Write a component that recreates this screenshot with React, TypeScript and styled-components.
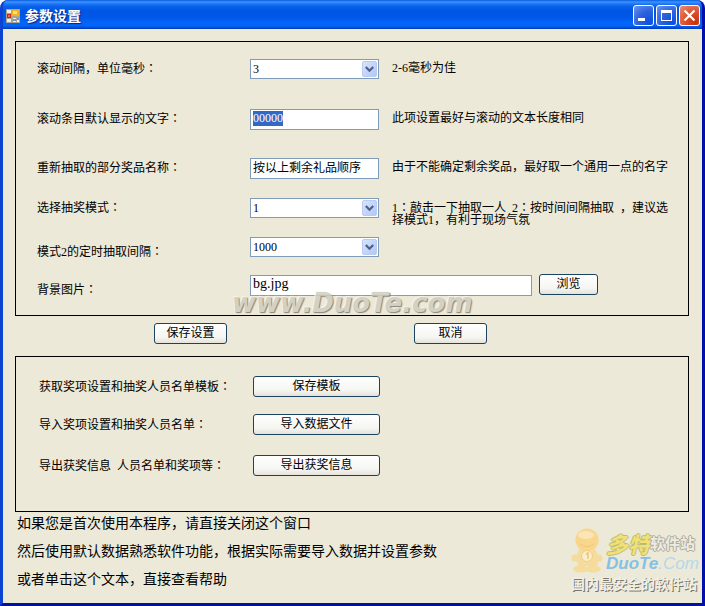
import React, { useEffect, useRef } from 'react';
import styled, { createGlobalStyle } from 'styled-components';

const GlobalStyle = createGlobalStyle`
  *, *::before, *::after { box-sizing: border-box; }
  html, body, #root { height: 100%; }
  body {
    margin: 0;
    background: #fff;
    color: #000;
    font: 12px/14px "Liberation Serif", "Noto Sans CJK SC", sans-serif;
  }
`;

const Window = styled.div`
  display: flex;
  flex-direction: column;
  min-height: 100vh;
  border: solid;
  border-width: 0 3px 3px;
  border-color: #0831d9 #0010a8 #0012a0 #0d43d2;
  border-radius: 8px 8px 0 0;
  background: #0a4fe0;
  overflow: hidden;
`;

const TitleBar = styled.header`
  display: flex;
  align-items: center;
  gap: 5px;
  height: 29px;
  margin: 0 -3px;
  padding: 2px 5px 0 6px;
  background: linear-gradient(
    #0a5be0 0, #3d95ff 2px, #1c74f4 4px, #0560ea 7px, #0055e2 11px,
    #0058ea 18px, #0266fb 23px, #0264f6 26px, #0046cf 28px, #0038b4 29px
  );
`;

const Title = styled.h1`
  flex: 1;
  margin: 0;
  padding-bottom: 2px;
  color: #fff;
  font: bold 14px/18px "Noto Sans CJK SC", sans-serif;
  text-shadow: 1px 1px 1px #0a1f80;
`;

const Captions = styled.div`
  display: flex;
  gap: 2px;
`;

const Caption = styled.button<{ $close?: boolean }>`
  display: grid;
  place-items: center;
  width: 21px;
  height: 21px;
  padding: 0;
  border: 1px solid #fff;
  border-radius: 3px;
  background: ${(p) =>
    p.$close
      ? 'radial-gradient(circle at 80% 85%, #c6320c, #dc5430 50%, #eb8f76)'
      : 'radial-gradient(circle at 80% 85%, #0d4fe4, #2c62dd 50%, #6f97ef)'};
`;

const Client = styled.main`
  position: relative;
  flex: 1;
  padding: 12px 13px 12px 12px;
  background: #ece9d8;
`;

const Panel = styled.section`
  border: 1px solid #000;
`;

const SettingsPanel = styled(Panel)`
  padding: 17px 16px 19px 21px;
`;

const ImportPanel = styled(Panel)`
  display: grid;
  grid-template-rows: 38px 41px 21px;
  padding: 19px 21px 35px 23px;
`;

const Row = styled.div<{ $height: number; $wide?: boolean }>`
  display: grid;
  grid-template-columns: ${(p) => (p.$wide ? '213px 282px 59px' : '213px 129px minmax(0, 1fr)')};
  align-items: start;
  height: ${(p) => p.$height}px;
`;

const ActionRow = styled.div`
  display: grid;
  grid-template-columns: 214px 127px;
  align-items: start;
`;

const LabelText = styled.label<{ $low?: boolean }>`
  padding-top: ${(p) => (p.$low ? 7 : 2)}px;
  white-space: nowrap;
`;

const ActionText = styled.span`
  padding-top: 3px;
  white-space: nowrap;
`;

const Colon = styled.span`
  font-family: "Noto Sans CJK TC", sans-serif;
`;

const Hint = styled.p`
  margin: 0;
  padding: 3px 0 0 13px;
  line-height: 12px;
`;

const TextField = styled.input`
  width: 100%;
  height: 21px;
  padding: 0 2px 3px;
  border: 1px solid #7f9db9;
  border-radius: 0;
  outline: none;
  background: #fff;
  color: #000;
  font: inherit;
  &::selection { background: #316ac5; color: #fff; }
`;

const FileField = styled(TextField)`
  font-size: 14px;
`;

const Combo = styled.div`
  display: grid;
  align-items: center;
  & > * { grid-area: 1 / 1; }
  & > svg { justify-self: end; margin-right: 1px; pointer-events: none; }
`;

const ComboSelect = styled.select`
  appearance: none;
  width: 100%;
  height: 20px;
  padding: 0 20px 1px 2px;
  border: 1px solid #7f9db9;
  border-radius: 0;
  outline: none;
  background: #fff;
  color: #000;
  font: inherit;
`;

const Button = styled.button`
  height: 21px;
  padding: 0 4px 1px;
  border: 1px solid #1c4262;
  border-radius: 3px;
  background: linear-gradient(#fff, #f5f5f2 70%, #e4e2da);
  color: #000;
  font: inherit;
`;

const BrowseButton = styled(Button)`
  margin: -1px -7px 0 7px;
`;

const Commands = styled.div`
  display: grid;
  grid-template-columns: 73px 73px;
  column-gap: 187px;
  padding: 7px 0 12px 139px;
`;

const Notes = styled.div`
  display: grid;
  justify-items: start;
  row-gap: 8px;
  padding-left: 2px;
  font: 14px/20px "Noto Sans CJK SC", sans-serif;
`;

const Note = styled.p`
  margin: 0;
`;

const HelpLink = styled.a`
  color: inherit;
  text-decoration: none;
`;

const SiteMark = styled.div`
  position: absolute;
  top: 259px;
  left: 229px;
  color: #cfcdc1;
  font: italic bold 26px/30px "DejaVu Sans", sans-serif;
  text-shadow: 1px 1px 1px #77756b, -1px -1px 1px #f8f7f0;
  opacity: 0.85;
  pointer-events: none;
`;

const Brand = styled.div`
  position: absolute;
  right: 5px;
  bottom: 11px;
  display: grid;
  grid-template-columns: 34px 92px;
  pointer-events: none;
  white-space: nowrap;
`;

const BrandText = styled.div`
  padding: 4px 0 0 1px;
`;

const BrandName = styled.div`
  display: flex;
  align-items: center;
  color: #efecdf;
  font: bold 15px/22px "Noto Sans CJK SC", sans-serif;
  text-shadow: 1px 0 #aaa9a0, 0 1px #aaa9a0, -1px 0 #aaa9a0, 0 -1px #aaa9a0;
`;

const BrandAccent = styled.span`
  color: #f3e077;
  font-size: 22px;
  font-style: italic;
  text-shadow: 1px 0 #b9bd74, -1px 0 #b9bd74, 0 1px #b9bd74, 0 -1px #b9bd74;
`;

const BrandSite = styled.div`
  color: #b4d8ea;
  font: italic 17px/20px "Liberation Sans", sans-serif;
`;

const BrandBold = styled.b`
  color: #86c0e4;
`;

const Slogan = styled.div`
  grid-column: 1 / -1;
  color: #f1efe4;
  font: bold 14px/18px "Noto Sans CJK SC", sans-serif;
  text-shadow: 1px 1px #77756c;
`;

function FormIcon() {
  return (
    <svg width="14" height="14" viewBox="0 0 14 14" aria-hidden="true">
      <path d="M0 0h14v14H0z" fill="#a9a595" />
      <path d="M1 1h4v3H1zM1 10h4v3H1zM7 9h3v4H7zM11 9h2v4h-2z" fill="#f3efe0" />
      <path d="M7 10h3v2H7zM11 9h2v2h-2z" fill="#6b9be4" />
      <path d="M1 5h4v4H1z" fill="#c8261b" />
      <path d="M2 6h2v2H2z" fill="#ee6a55" />
      <path d="M6 1h7v6H6z" fill="#f2b11f" />
      <path d="M7 2h4v3H7z" fill="#ffe277" />
    </svg>
  );
}

function Arrow() {
  return (
    <svg width="17" height="18" viewBox="0 0 17 18" aria-hidden="true">
      <defs>
        <linearGradient id="arrowFace" x1="0" y1="0" x2="1" y2="1">
          <stop offset="0" stopColor="#d9e5ff" />
          <stop offset="1" stopColor="#afc6f6" />
        </linearGradient>
      </defs>
      <rect x="1.5" y="1.5" width="14" height="15" rx="1.5" fill="url(#arrowFace)" stroke="#b9cbf3" />
      <path d="M4.8 7l3.7 3.7L12.2 7" fill="none" stroke="#4d6185" strokeWidth="2.2" />
    </svg>
  );
}

function Mascot() {
  return (
    <svg width="33" height="46" viewBox="0 0 33 46" aria-hidden="true">
      <g fill="#f5dc9d">
        <path d="M8 21q8 5 16 0l4 8-2 9H7l-2-9z" />
        <circle cx="4" cy="30" r="3.5" />
        <circle cx="28" cy="30" r="3.5" />
        <ellipse cx="10" cy="41" rx="8" ry="3.5" />
        <ellipse cx="22" cy="41" rx="8" ry="3.5" />
      </g>
      <circle cx="16" cy="12" r="11.5" fill="#f8d68c" />
      <ellipse cx="15" cy="7" rx="8" ry="4" fill="#fbe5b4" />
      <path d="M9 16q7 5 14 0" fill="none" stroke="#efc879" />
      <circle cx="16" cy="28" r="5.5" fill="#f9edcf" stroke="#efcd87" />
      <path d="M15 26l2-1v6" fill="none" stroke="#edc675" strokeWidth="1.5" />
    </svg>
  );
}

interface LabelProps {
  htmlFor: string;
  low?: boolean;
  children: React.ReactNode;
}

function Label({ htmlFor, low, children }: LabelProps) {
  return (
    <LabelText htmlFor={htmlFor} $low={low}>
      {children}
      <Colon>：</Colon>
    </LabelText>
  );
}

function Dropdown({ id, options }: { id: string; options: string[] }) {
  return (
    <Combo>
      <ComboSelect id={id} defaultValue={options[0]}>
        {options.map((o) => (
          <option key={o}>{o}</option>
        ))}
      </ComboSelect>
      <Arrow />
    </Combo>
  );
}

const actions = [
  { text: '获取奖项设置和抽奖人员名单模板', button: '保存模板' },
  { text: '导入奖项设置和抽奖人员名单', button: '导入数据文件' },
  { text: '导出获奖信息\u2002人员名单和奖项等', button: '导出获奖信息' },
];

export default function App() {
  const placeholderText = useRef<HTMLInputElement>(null);

  useEffect(() => {
    placeholderText.current?.focus();
    placeholderText.current?.select();
  }, []);

  return (
    <>
      <GlobalStyle />
      <Window>
        <TitleBar>
          <FormIcon />
          <Title>参数设置</Title>
          <Captions>
            <Caption type="button" aria-label="最小化">
              <svg width="19" height="19" viewBox="0 0 19 19">
                <path d="M4 12h7v3H4z" fill="#fff" />
              </svg>
            </Caption>
            <Caption type="button" aria-label="最大化">
              <svg width="19" height="19" viewBox="0 0 19 19">
                <path d="M4 4h11v11H4zM5 7v7h9V7z" fill="#fff" fillRule="evenodd" />
              </svg>
            </Caption>
            <Caption type="button" aria-label="关闭" $close>
              <svg width="19" height="19" viewBox="0 0 19 19">
                <path d="M4.500 4.500l10 10m0-10l-10 10" stroke="#fff" strokeWidth="2.200" />
              </svg>
            </Caption>
          </Captions>
        </TitleBar>
        <Client>
          <SettingsPanel>
            <Row $height={50}>
              <Label htmlFor="interval">滚动间隔，单位毫秒</Label>
              <Dropdown id="interval" options={['3', '2', '4', '5', '6']} />
              <Hint>2-6毫秒为佳</Hint>
            </Row>
            <Row $height={49}>
              <Label htmlFor="rolling">滚动条目默认显示的文字</Label>
              <TextField id="rolling" ref={placeholderText} defaultValue="00000" />
              <Hint>此项设置最好与滚动的文本长度相同</Hint>
            </Row>
            <Row $height={40}>
              <Label htmlFor="prize">重新抽取的部分奖品名称</Label>
              <TextField id="prize" defaultValue="按以上剩余礼品顺序" />
              <Hint>由于不能确定剩余奖品，最好取一个通用一点的名字</Hint>
            </Row>
            <Row $height={39}>
              <Label htmlFor="mode">选择抽奖模式</Label>
              <Dropdown id="mode" options={['1', '2']} />
              <Hint>
                1<Colon>：</Colon>敲击一下抽取一人{'\u2002'}2<Colon>：</Colon>按时间间隔抽取{'\u2002'}，建议选择模式1，有利于现场气氛
              </Hint>
            </Row>
            <Row $height={38}>
              <Label htmlFor="timer" low>模式2的定时抽取间隔</Label>
              <Dropdown id="timer" options={['1000', '2000', '3000']} />
            </Row>
            <Row $height={21} $wide>
              <Label htmlFor="background" low>背景图片</Label>
              <FileField id="background" defaultValue="bg.jpg" />
              <BrowseButton type="button">浏览</BrowseButton>
            </Row>
          </SettingsPanel>
          <Commands>
            <Button type="button">保存设置</Button>
            <Button type="button">取消</Button>
          </Commands>
          <ImportPanel>
            {actions.map((a) => (
              <ActionRow key={a.button}>
                <ActionText>
                  {a.text}
                  <Colon>：</Colon>
                </ActionText>
                <Button type="button">{a.button}</Button>
              </ActionRow>
            ))}
          </ImportPanel>
          <Notes>
            <Note>如果您是首次使用本程序，请直接关闭这个窗口</Note>
            <Note>然后使用默认数据熟悉软件功能，根据实际需要导入数据并设置参数</Note>
            <HelpLink href="#help">或者单击这个文本，直接查看帮助</HelpLink>
          </Notes>
          <SiteMark>www.DuoTe.com</SiteMark>
          <Brand>
            <Mascot />
            <BrandText>
              <BrandName>
                <BrandAccent>多特</BrandAccent>软件站
              </BrandName>
              <BrandSite>
                <BrandBold>DuoTe</BrandBold>.Com
              </BrandSite>
            </BrandText>
            <Slogan>国内最安全的软件站</Slogan>
          </Brand>
        </Client>
      </Window>
    </>
  );
}
